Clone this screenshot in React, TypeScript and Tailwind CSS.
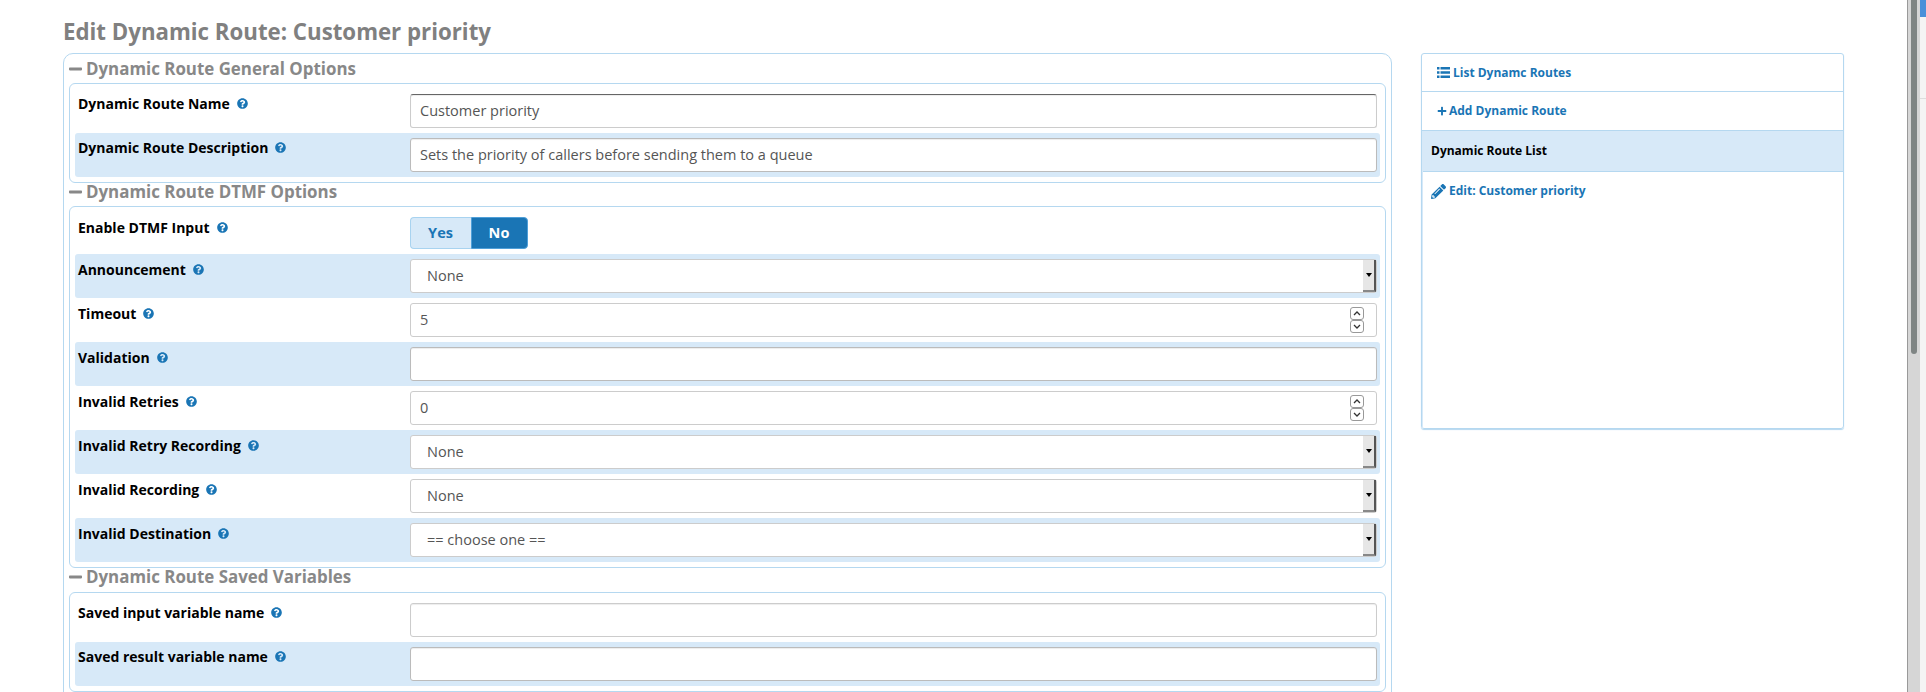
import React from "react";
import { FaMinus, FaPencilAlt, FaPlus, FaQuestionCircle } from "react-icons/fa";

function Help() {
  return <FaQuestionCircle className="ml-[7px] h-[11px] w-[11px] shrink-0 text-[#1a75b5]" />;
}

function SectionTitle({ title, className }: { title: string; className: string }) {
  return (
    <h3 className={`flex items-start pl-[5px] text-[16.9px] font-bold leading-[18px] text-[#888] ${className}`}>
      <FaMinus className="mr-[4px] h-[18px] w-[13px] shrink-0" />
      {title}
    </h3>
  );
}

function Row({ label, alt, short, tight, children }: { label: string; alt?: boolean; short?: boolean; tight?: boolean; children: React.ReactNode }) {
  return (
    <div
      className={`flex rounded-[3px] pl-[3px] pr-[3px] pt-[5px] ${short ? "h-[42px]" : "h-[44px]"} ${alt ? "bg-[#d7e9f8]" : ""}`}
    >
      <label className={`flex w-[332px] shrink-0 items-center text-[14px] font-bold text-black ${tight ? "h-[18px]" : "h-[20px]"}`}>
        {label}
        <Help />
      </label>
      <div className="min-w-0 flex-1">{children}</div>
    </div>
  );
}

function TextBox({ value, dark, alt }: { value?: string; dark?: boolean; alt?: boolean }) {
  return (
    <div
      className={`flex h-[34px] items-center rounded-[3px] border bg-white px-[9px] text-[14.5px] text-[#555] shadow-[inset_0_1px_1px_rgba(0,0,0,0.075)] ${dark ? "border-[#ccc] border-t-[#666]" : alt ? "border-[#bbb]" : "border-[#ccc]"}`}
    >
      {value}
    </div>
  );
}

function SelectBox({ value }: { value: string }) {
  return (
    <div className="flex h-[34px] items-center rounded-[3px] border border-[#ccc] bg-white pl-[16px] text-[14.5px] text-[#555]">
      <span className="flex-1">{value}</span>
      <span className="flex h-[32px] w-[13px] items-center justify-center border-b-2 border-r-2 border-b-[#888] border-r-[#555] bg-[#e6e6e6]">
        <span className="h-0 w-0 border-x-[3px] border-t-[4px] border-x-transparent border-t-black" />
      </span>
    </div>
  );
}

function NumberBox({ value }: { value: string }) {
  return (
    <div className="flex h-[34px] items-center rounded-[3px] border border-[#ccc] bg-white pl-[9px] pr-[12px] text-[14.5px] text-[#555]">
      <span className="flex-1">{value}</span>
      <span className="flex w-[14px] flex-col">
        <span className="flex h-[13px] items-center justify-center rounded-[3px] border border-[#999]">
          <svg width="8" height="5" viewBox="0 0 8 5" fill="none" stroke="#333" strokeWidth="1.3">
            <path d="M1 4l3-3 3 3" />
          </svg>
        </span>
        <span className="flex h-[13px] items-center justify-center rounded-[3px] border border-[#999]">
          <svg width="8" height="5" viewBox="0 0 8 5" fill="none" stroke="#333" strokeWidth="1.3">
            <path d="M1 1l3 3 3-3" />
          </svg>
        </span>
      </span>
    </div>
  );
}

function Toggle() {
  return (
    <div className="flex h-[32px] w-[118px] text-[14.5px] font-bold">
      <span className="flex w-[61px] items-center justify-center rounded-l-[4px] border border-r-0 border-[#a8d3f0] bg-[#d7e9f8] pr-px text-[#1a75b5]">
        Yes
      </span>
      <span className="flex flex-1 items-center justify-center rounded-r-[4px] border border-[#4f9fd8] bg-[#1a75b5] pr-px text-white">
        No
      </span>
    </div>
  );
}

function Group({ children }: { children: React.ReactNode }) {
  return <div className="mx-[5px] rounded-[6px] border border-[#b5d8f0] p-[5px]">{children}</div>;
}

function ListIcon() {
  return (
    <svg width="13" height="11" viewBox="0 0 13 11" fill="#1a75b5" className="shrink-0">
      <path d="M0 0h2.5v2.5H0zM3.5 0H13v2.5H3.5zM0 4.2h2.5v2.5H0zM3.5 4.2H13v2.5H3.5zM0 8.4h2.5v2.5H0zM3.5 8.4H13v2.5H3.5z" />
    </svg>
  );
}

export default function App() {
  return (
    <div className="flex h-[692px] overflow-hidden bg-white font-['Open_Sans',sans-serif]">
      <div className="min-w-0 flex-1 pl-[63px] pt-[18px]">
        <h2 className="h-[35px] text-[22.25px] font-bold leading-[27px] text-[#808080]">
          Edit Dynamic Route: Customer priority
        </h2>
        <div className="flex items-start">
          <div className="h-[700px] w-[1329px] shrink-0 rounded-[10px] border border-[#b5d8f0]">
            <SectionTitle title="Dynamic Route General Options" className="h-[29px] pt-[6px]" />
            <Group>
              <Row label="Dynamic Route Name" tight>
                <TextBox value="Customer priority" dark />
              </Row>
              <Row label="Dynamic Route Description" alt tight>
                <TextBox value="Sets the priority of callers before sending them to a queue" alt />
              </Row>
            </Group>
            <SectionTitle title="Dynamic Route DTMF Options" className="h-[23px]" />
            <Group>
              <Row label="Enable DTMF Input" short>
                <Toggle />
              </Row>
              <Row label="Announcement" alt>
                <SelectBox value="None" />
              </Row>
              <Row label="Timeout">
                <NumberBox value="5" />
              </Row>
              <Row label="Validation" alt>
                <TextBox alt />
              </Row>
              <Row label="Invalid Retries">
                <NumberBox value="0" />
              </Row>
              <Row label="Invalid Retry Recording" alt>
                <SelectBox value="None" />
              </Row>
              <Row label="Invalid Recording">
                <SelectBox value="None" />
              </Row>
              <Row label="Invalid Destination" alt>
                <SelectBox value="== choose one ==" />
              </Row>
            </Group>
            <SectionTitle title="Dynamic Route Saved Variables" className="h-[24px]" />
            <Group>
              <Row label="Saved input variable name" tight>
                <TextBox />
              </Row>
              <Row label="Saved result variable name" alt tight>
                <TextBox alt />
              </Row>
            </Group>
          </div>
          <div className="ml-[29px] h-[376px] w-[423px] shrink-0 rounded-[3px] border border-[#b5d8f0] text-[12px] font-bold shadow-[0_1px_1px_#b5d8f0]">
            <div className="flex h-[38px] items-center gap-[3px] border-b border-[#b5d8f0] pl-[15px] text-[#1a75b5]">
              <ListIcon />
              List Dynamc Routes
            </div>
            <div className="flex h-[39px] items-center gap-[2px] border-b border-[#b5d8f0] pl-[15px] text-[#1a75b5]">
              <FaPlus className="h-[10px] w-[10px]" />
              Add Dynamic Route
            </div>
            <div className="h-[297px] border-l border-[#d7e9f8]">
              <div className="flex h-[41px] items-center border-b border-[#b5d8f0] bg-[#d7e9f8] pl-[8px] text-black">
                Dynamic Route List
              </div>
              <div className="flex h-[38px] items-center gap-[3px] pl-[8px] text-[#1a75b5]">
                <FaPencilAlt className="h-[15px] w-[15px]" />
                Edit: Customer priority
              </div>
            </div>
          </div>
        </div>
      </div>
      <div className="flex w-[13px] shrink-0 border-l border-[#999] bg-[#d6d6d6]">
        <div className="ml-[3px] h-[354px] w-[6px] rounded-b-[3px] bg-[#7f8584]" />
      </div>
      <div className="w-[6px] shrink-0 bg-[#f4f4f4]">
        <div className="h-[17px] bg-[#4a90d9]" />
        <div className="mt-[81px] h-px bg-[#ddd]" />
      </div>
    </div>
  );
}
